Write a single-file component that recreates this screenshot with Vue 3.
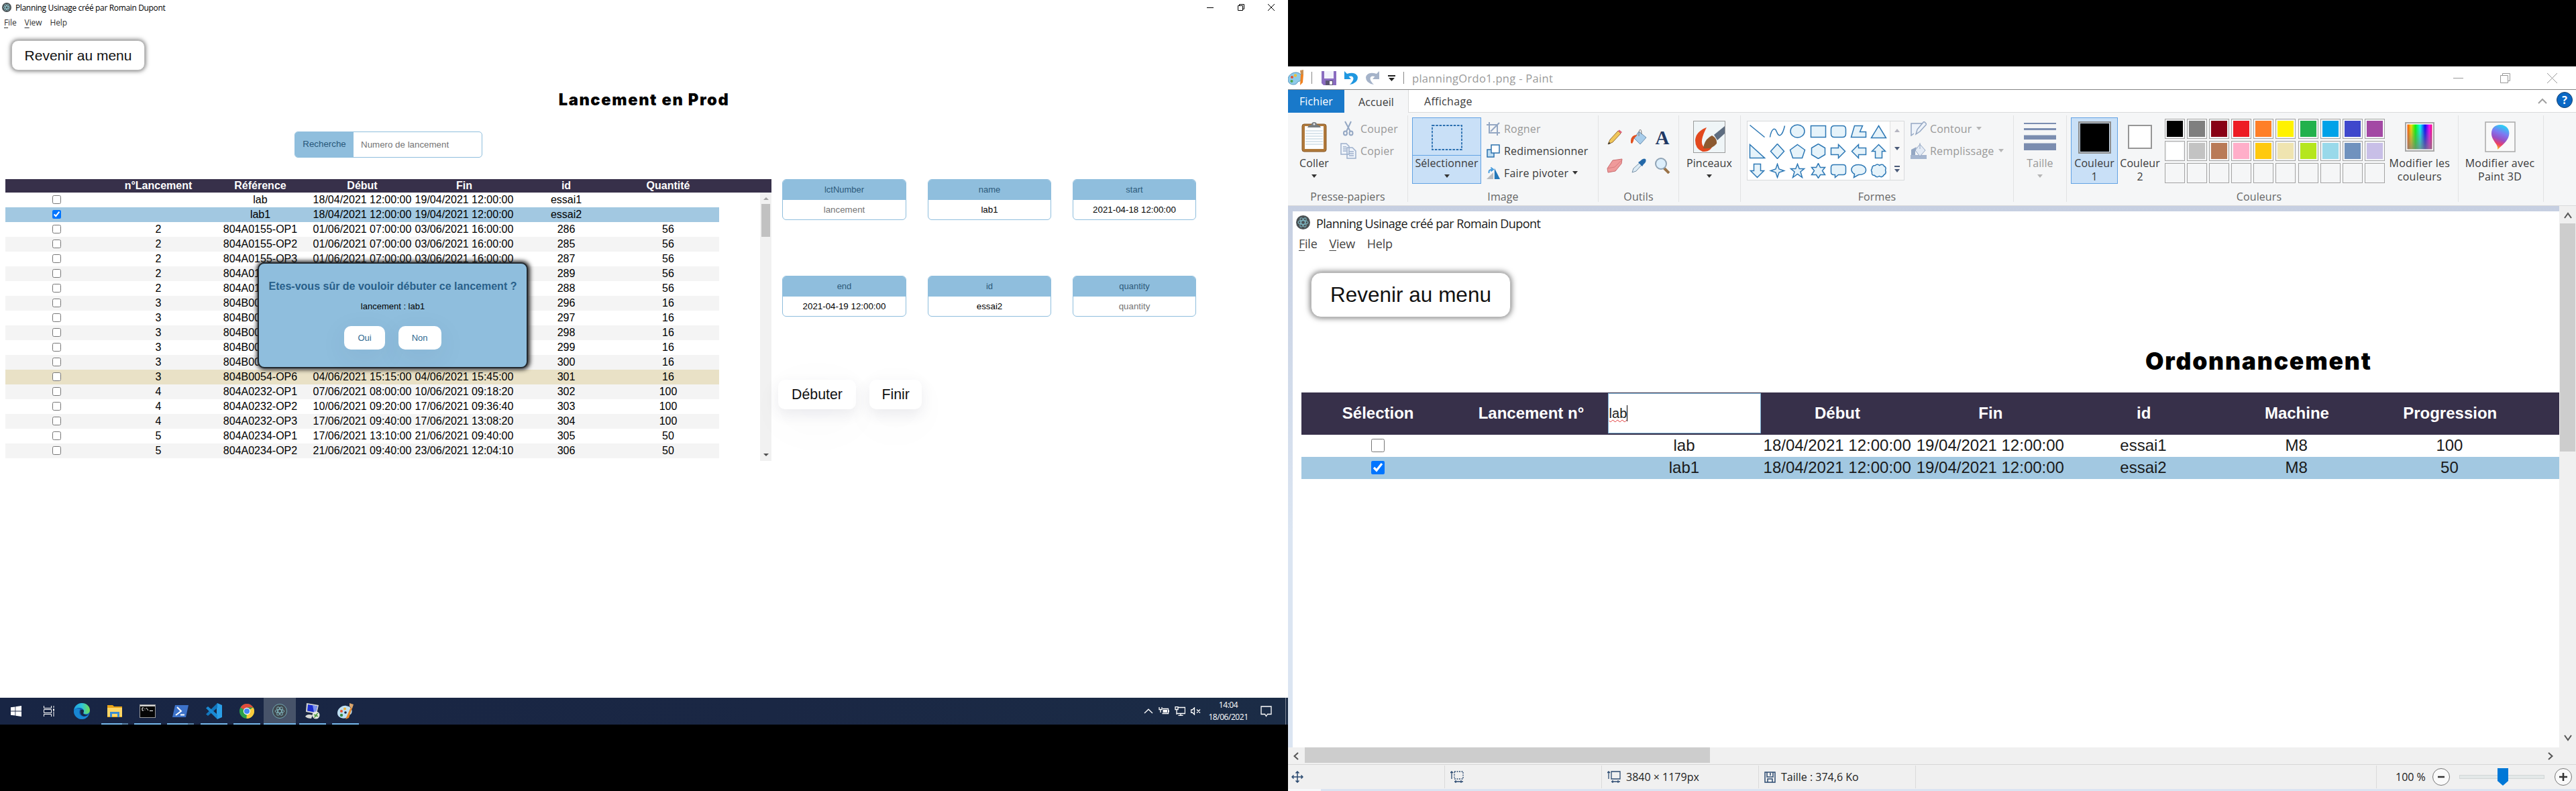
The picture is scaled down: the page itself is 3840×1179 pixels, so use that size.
<script setup>
const rows = [
  ['', 'lab', '18/04/2021 12:00:00', '19/04/2021 12:00:00', 'essai1', ''],
  ['', 'lab1', '18/04/2021 12:00:00', '19/04/2021 12:00:00', 'essai2', ''],
  ['2', '804A0155-OP1', '01/06/2021 07:00:00', '03/06/2021 16:00:00', '286', '56'],
  ['2', '804A0155-OP2', '01/06/2021 07:00:00', '03/06/2021 16:00:00', '285', '56'],
  ['2', '804A0155-OP3', '01/06/2021 07:00:00', '03/06/2021 16:00:00', '287', '56'],
  ['2', '804A0155-OP4', '', '', '289', '56'],
  ['2', '804A0155-OP5', '', '', '288', '56'],
  ['3', '804B0054-OP1', '', '', '296', '16'],
  ['3', '804B0054-OP2', '', '', '297', '16'],
  ['3', '804B0054-OP3', '', '', '298', '16'],
  ['3', '804B0054-OP4', '', '', '299', '16'],
  ['3', '804B0054-OP5', '', '', '300', '16'],
  ['3', '804B0054-OP6', '04/06/2021 15:15:00', '04/06/2021 15:45:00', '301', '16'],
  ['4', '804A0232-OP1', '07/06/2021 08:00:00', '10/06/2021 09:18:20', '302', '100'],
  ['4', '804A0232-OP2', '10/06/2021 09:20:00', '17/06/2021 09:36:40', '303', '100'],
  ['4', '804A0232-OP3', '17/06/2021 09:40:00', '17/06/2021 13:08:20', '304', '100'],
  ['5', '804A0234-OP1', '17/06/2021 13:10:00', '21/06/2021 09:40:00', '305', '50'],
  ['5', '804A0234-OP2', '21/06/2021 09:40:00', '23/06/2021 12:04:10', '306', '50'],
]
const rowClass = (i) => (i === 1 ? 'sel' : i === 12 ? 'late' : i % 2 ? 'odd' : '')

const fields = [
  { label: 'lctNumber', value: 'lancement', empty: true },
  { label: 'name', value: 'lab1' },
  { label: 'start', value: '2021-04-18 12:00:00' },
  { label: 'end', value: '2021-04-19 12:00:00' },
  { label: 'id', value: 'essai2' },
  { label: 'quantity', value: 'quantity', empty: true },
]

const ordo = [
  ['', 'lab', '18/04/2021 12:00:00', '19/04/2021 12:00:00', 'essai1', 'M8', '100'],
  ['', 'lab1', '18/04/2021 12:00:00', '19/04/2021 12:00:00', 'essai2', 'M8', '50'],
]

const palette = [
  '#000000', '#7f7f7f', '#880015', '#ed1c24', '#ff7f27', '#fff200', '#22b14c', '#00a2e8', '#3f48cc', '#a349a4',
  '#ffffff', '#c3c3c3', '#b97a57', '#ffaec9', '#ffc90e', '#efe4b0', '#b5e61d', '#99d9ea', '#7092be', '#c8bfe7',
  '', '', '', '', '', '', '', '', '', '',
]

const shapes = [
  'M1 2L23 20',
  'M1 20C3 8 8 4 11 12S19 20 23 3',
  'M12 1.500A10.500 9.500 0 1 0 12 20.500A10.500 9.500 0 1 0 12 1.500Z',
  'M1 3H23V20H1Z',
  'M6 3H18Q23 3 23 8V15Q23 20 18 20H6Q1 20 1 15V8Q1 3 6 3Z',
  'M6 3H18L14 12H23V20H1Z',
  'M12 3L23 21H1Z',
  'M1 1V21H23Z',
  'M12 0L22 11L12 22L2 11Z',
  'M12 1L23 9L19 21H5L1 9Z',
  'M12 0L22 6V16L12 22L2 16V6Z',
  'M1 6H12V1L22 11L12 21V16H1Z',
  'M23 6H12V1L2 11L12 21V16H23Z',
  'M7 21V11H2L12 1L22 11H17V21Z',
  'M7 1V11H2L12 21L22 11H17V1Z',
  'M12 1L14.500 8.500L22 11L14.500 13.500L12 21L9.500 13.500L2 11L9.500 8.500Z',
  'M12 1L14.700 8H22L16.500 12.500L19 21L12 16L5 21L7.500 12.500L2 8H9.300Z',
  'M12 0L15 6H22L18 11L22 17H15L12 22L9 17H2L6 11L2 6H9Z',
  'M5 2H19Q23 2 23 6V13Q23 17 19 17H12L7 21V17H5Q1 17 1 13V6Q1 2 5 2Z',
  'M12 2C18 2 23 5 23 10S18 17 12 17L5 21L6 16C-2 11 1 2 12 2Z',
  'M7 3Q10 0 13 3Q18 0 20 4Q24 6 22 10Q24 15 20 17Q17 22 13 19Q9 22 6 18Q1 18 2 13Q0 10 2 8Q2 3 7 3Z',
]
</script>

<template>
  <div class="desk">
    <!-- left monitor -->
    <section class="left">
      <div class="page">
        <header class="bar seg">
          <svg class="atom" viewBox="0 0 24 24"><circle cx="12" cy="12" r="12" fill="#4b5255" /><g fill="none" stroke="#8fc3cc" stroke-width="1.500"><ellipse cx="12" cy="12" rx="8.500" ry="3.300" /><ellipse cx="12" cy="12" rx="8.500" ry="3.300" transform="rotate(60 12 12)" /><ellipse cx="12" cy="12" rx="8.500" ry="3.300" transform="rotate(120 12 12)" /></g></svg>
          <span class="apptitle">Planning Usinage créé par Romain Dupont</span>
          <span class="wc"><svg viewBox="0 0 12 12"><path d="M1 6.500H11" /></svg></span>
          <span class="wc"><svg viewBox="0 0 12 12"><path d="M1.500 3.500H8.500V10.500H1.500ZM3.500 3.500V1.500H10.500V8.500H8.500" /></svg></span>
          <span class="wc"><svg viewBox="0 0 12 12"><path d="M1 1L11 11M11 1L1 11" /></svg></span>
        </header>
        <nav class="menu seg"><span><u>F</u>ile</span><span><u>V</u>iew</span><span>Help</span></nav>
        <button class="back">Revenir au menu</button>
        <h1 class="title">Lancement en Prod</h1>
        <div class="search"><label>Recherche</label><span>Numero de lancement</span></div>
        <div class="main">
          <div class="table">
            <div class="thead"><b></b><b>n°Lancement</b><b>Référence</b><b>Début</b><b>Fin</b><b>id</b><b>Quantité</b></div>
            <div class="tscroll">
              <div class="tbody">
                <div v-for="(r, i) in rows" :key="i" class="tr" :class="rowClass(i)">
                  <span><input type="checkbox" :checked="i === 1" /></span>
                  <span v-for="(c, j) in r" :key="j">{{ c }}</span>
                </div>
              </div>
              <div class="vsb"><i class="up"></i><i class="thumb"></i><i class="down"></i></div>
            </div>
          </div>
          <div class="side">
            <div class="fields">
              <div v-for="f in fields" :key="f.label" class="field">
                <label>{{ f.label }}</label><span :class="{ ph: f.empty }">{{ f.value }}</span>
              </div>
            </div>
            <div class="acts"><button>Débuter</button><button>Finir</button></div>
          </div>
        </div>
        <div class="modal">
          <h2>Etes-vous sûr de vouloir débuter ce lancement ?</h2>
          <p>lancement : lab1</p>
          <div><button>Oui</button><button>Non</button></div>
        </div>
      </div>

      <footer class="taskbar seg">
        <span class="tk"><svg width="16" height="16" viewBox="0 0 16 16" fill="#fff"><path d="M0 2.300L6.500 1.400V7.600H0ZM7.300 1.300L16 0V7.600H7.300ZM0 8.400H6.500V14.600L0 13.700ZM7.300 8.400H16V16L7.300 14.700Z" /></svg></span>
        <span class="tk"><svg width="16" height="16" viewBox="0 0 16 16" fill="none" stroke="#fff"><path d="M.500 0V3.500H11.500V0M.500 16V12.500H11.500V16M.500 5.500H11.500V10.500H.500ZM15 0V3M15 8.500V16" /><path d="M14 6H16" stroke-width="3" /></svg></span>
        <span class="tk"><svg width="24" height="24" viewBox="0 0 24 24"><defs><linearGradient id="eg" x1="0" x2="1"><stop offset="0" stop-color="#1d9fe0" /><stop offset=".5" stop-color="#2fc4d8" /><stop offset="1" stop-color="#70dd50" /></linearGradient></defs><circle cx="12" cy="12" r="12" fill="#0f5fb5" /><path d="M0 11C1 4 6 0 12 0C19 0 24 5 24 10.500C24 15 20 17 16 16C13.500 15.500 14.500 14 15 12C15 9 12 7 8.500 7C4 7 1 9 0 11Z" fill="url(#eg)" /><path d="M9 10C6 15 10 20 15 20C18 20 21 18.500 22 17.500C20 22 16 24 12 24C5 24 0 18 0 12C1 8.500 5 7 9 8.500Z" fill="#1886d2" /><path d="M10 10Q15 9 15 12C15 14 13 15 15 16.500Q18 18.300 22 17Q18 20.500 14 19.500Q8 17 10 10Z" fill="#182544" /></svg></span>
        <span class="tk run two"><svg width="22" height="20" viewBox="0 0 22 20"><path d="M0 1H8L10 3H22V19H0Z" fill="#e8a317" /><path d="M0 5H22V18H0Z" fill="#ffd766" /><path d="M4 19V11H18V19H15V14H7V19Z" fill="#3a8dd4" /></svg></span>
        <span class="tk run"><svg width="24" height="20" viewBox="0 0 24 20"><rect width="24" height="20" fill="#9b9b9b" /><rect x="1" y="3" width="22" height="16" fill="#050505" /><rect x="1" y="1" width="22" height="1.500" fill="#ddd" /><path d="M6 5H4V9H6M8 6V7M8 8.500V9M10 5L13 9M15 9.500H20" stroke="#fff" fill="none" /></svg></span>
        <span class="tk run two"><svg width="24" height="18" viewBox="0 0 24 18"><path d="M4 0H24L20 18H0Z" fill="#3d72c9" /><path d="M7 3L13 9L5 15M12 14.500H18" fill="none" stroke="#fff" stroke-width="2" /></svg></span>
        <span class="tk run"><svg width="24" height="24" viewBox="0 0 24 24"><path d="M17 0L24 3V21L17 24L16 22V2Z" fill="#2a9fe8" /><path d="M17 0V7L3 19L0 16.500Z" fill="#1277be" /><path d="M17 24V17L3 5L0 7.500Z" fill="#1a8ad4" /></svg></span>
        <span class="tk run"><svg width="22" height="22" viewBox="0 0 22 22"><circle cx="11" cy="11" r="11" fill="#2ba14b" /><path d="M11 11L1.500 5.500A11 11 0 0 1 20.500 5.500H11Z" fill="#df4a3c" /><path d="M11 11L20.500 5.500A11 11 0 0 1 10.500 22Z" fill="#fbcb3c" /><circle cx="11" cy="11" r="5.200" fill="#fff" /><circle cx="11" cy="11" r="4.100" fill="#4587f3" /></svg></span>
        <span class="tk run on"><svg width="22" height="22" viewBox="0 0 24 24"><circle cx="12" cy="12" r="11.500" fill="#40484f" stroke="#75aeb7" /><g fill="none" stroke="#82b8bf"><ellipse cx="12" cy="12" rx="7.500" ry="2.800" /><ellipse cx="12" cy="12" rx="7.500" ry="2.800" transform="rotate(60 12 12)" /><ellipse cx="12" cy="12" rx="7.500" ry="2.800" transform="rotate(120 12 12)" /></g></svg></span>
        <span class="tk run"><svg width="24" height="24" viewBox="0 0 24 24"><path d="M3 0L21 3L18 16L2 13Z" fill="#d5d8d6" /><path d="M5 2L19 4.500L16.500 14L4 11.500Z" fill="#1b2fd0" /><path d="M12 3L19 4.500L16.500 14L14 13.500Z" fill="#7d93f0" /><path d="M1 20Q4 15 12 18L10 23Q4 23 1 20Z" fill="#d9dbd8" /><circle cx="17" cy="18" r="5.500" fill="#e4e6e2" /><path d="M14 17L17 19.500L14 21.500M20 15L17 17.500L20 20" stroke="#4b9a3a" fill="none" stroke-width="1.500" /></svg></span>
        <span class="tk run"><svg width="24" height="24" viewBox="0 0 24 24"><path d="M0 15C0 8 7 3 13 4C20 5 23 10 21 15C19 19 16 16 15 20C13 25 0 23 0 15Z" fill="#bfe0f3" /><circle cx="6" cy="12" r="2" fill="#e8512c" /><circle cx="11" cy="8.500" r="2" fill="#f0b43a" /><circle cx="6" cy="18" r="2.200" fill="#3a8a47" /><circle cx="12" cy="14" r="1.800" fill="#182544" /><path d="M20 6L12 24L17 22L22 7Z" fill="#e98a2b" /><path d="M18 0L24 2L22 8L18 5Z" fill="#d8a46c" /></svg></span>
        <span class="tray">
          <svg width="14" height="8" viewBox="0 0 14 8" class="st"><path d="M1 7L7 1.200L13 7" /></svg>
          <svg width="16" height="14" viewBox="0 0 16 14" class="st"><path d="M1 1V4.500H5V1M3 5V9M6 3.500H14.500V10.500H5.500" /><path d="M6.500 5H13V9H6.500ZM15 5.500H16V8.500H15Z" fill="#fff" stroke="none" /></svg>
          <svg width="16" height="14" viewBox="0 0 16 14" class="st"><path d="M5 1.500H15.500V10.500H3M9 10.500V13M5.500 13.500H12.500M1 .500H5V4.500H1ZM3 4.500V12" /></svg>
          <svg width="15" height="12" viewBox="0 0 15 12" class="st"><path d="M.500 4H2.500L5.500 1V11L2.500 8H.500ZM9 3.500L14 8.500M14 3.500L9 8.500" /></svg>
          <span class="clock"><span>14:04</span><span>18/06/2021</span></span>
          <svg width="17" height="17" viewBox="0 0 17 17" class="st"><path d="M1 1H16V12.500H10.500L8.500 15.500L6.500 12.500H1Z" /></svg>
          <i></i>
        </span>
      </footer>
    </section>

    <!-- right monitor : Paint -->
    <section class="right">
      <header class="ptitle seg2">
        <svg width="24" height="24" viewBox="0 0 24 24"><path d="M0 15C0 8 6 4 12 4C18 4 22 9 20 14C18 19 15 16 14 19C12 24 0 23 0 15Z" fill="#8fcbe9" stroke="#5595bd" /><circle cx="6" cy="11" r="2" fill="#e84c2c" /><circle cx="11" cy="8.500" r="2.200" fill="#ebc13a" /><circle cx="5.500" cy="17" r="2" fill="#4ca64c" /><path d="M19 7L18 23L22 19L23 7Z" fill="#f0811f" /><path d="M18 1L23 0L23 7H19Z" fill="#c98f52" /></svg>
        <i class="bar1"></i>
        <svg class="save" width="22" height="21" viewBox="0 0 22 21"><path d="M0 0H22V21H3L0 18Z" fill="#8a6cc0" /><path d="M4 0H18V11H4Z" fill="#f2f2fb" /><path d="M6 14H17V21H6Z" fill="#5a5570" /><path d="M12 15H16V20H12Z" fill="#fff" /></svg>
        <svg class="undo" width="20" height="20" viewBox="0 0 20 20"><path d="M0 0V12H10L6.500 8Q13 6 13.500 11Q13.500 15 8 20Q20 18 20 9.500Q18 0 4 4Z" fill="#1f97e0" /></svg>
        <svg class="redo" width="20" height="20" viewBox="0 0 20 20"><path d="M20 0V12H10L13.500 8Q7 6 6.500 11Q6.500 15 12 20Q0 18 0 9.500Q2 0 16 4Z" fill="#a5b3c9" /></svg>
        <svg class="cust" width="11" height="9" viewBox="0 0 11 9"><path d="M0 0H11V2H0ZM1 4H10L5.500 9Z" fill="#222" /></svg>
        <i class="bar2"></i>
        <span class="ptxt">planningOrdo1.png - Paint</span>
        <span class="pwc"><svg viewBox="0 0 17 17"><path d="M1 8.500H16" /></svg></span>
        <span class="pwc"><svg viewBox="0 0 17 17"><path d="M1.500 4.500H12.500V15.500H1.500ZM4.500 4.500V1.500H15.500V12.500H12.500" /></svg></span>
        <span class="pwc"><svg viewBox="0 0 17 17"><path d="M1 1L16 16M16 1L1 16" /></svg></span>
      </header>
      <nav class="tabs seg2">
        <span class="file">Fichier</span><span class="acc">Accueil</span><span class="aff">Affichage</span>
        <svg width="14" height="9" viewBox="0 0 14 9"><path d="M1 8L7 2L13 8" fill="none" stroke="#a0a0a0" stroke-width="2" /></svg>
        <span class="help">?</span>
      </nav>

      <div class="ribbon seg2">
        <div class="grp g1">
          <div class="body">
            <div class="big w78"><div class="ic"><svg width="38" height="46" viewBox="0 0 38 46"><rect x="1" y="4" width="36" height="41" rx="3" fill="#b0793a" stroke="#8a5a26" /><rect x="5" y="7" width="28" height="34" fill="#fdfeff" /><path d="M6 14H32M6 18H32M6 22H32M6 26H32M6 30H32M6 34H32" stroke="#b9cdd9" /><path d="M9 9Q11 5 15 5Q15 1 19 1Q23 1 23 5Q27 5 29 9Z" fill="#777c80" /><circle cx="19" cy="4" r="1.500" fill="#eee" /></svg></div><span>Coller</span><i class="arr"></i></div>
            <div class="list dis">
              <div><svg width="24" height="24" viewBox="0 0 24 24" fill="none" stroke="#94a7c3" stroke-width="2"><path d="M7 1L15 16M16 1L9 16" /><ellipse cx="7.500" cy="18.500" rx="2.500" ry="3" /><ellipse cx="16" cy="18.500" rx="2.500" ry="3" /></svg><span>Couper</span></div>
              <div><svg width="24" height="24" viewBox="0 0 24 24" fill="#eef3fa" stroke="#9db0cc" stroke-width="1.500"><path d="M1 1H9L13 5V17H1ZM10 7H18L23 12V23H10Z" /><path d="M4 6H9M4 9H9M4 12H9M13 13H20M13 16H20M13 19H20" /></svg><span>Copier</span></div>
            </div>
          </div>
          <p>Presse-papiers</p>
        </div>
        <div class="grp g2">
          <div class="body">
            <div class="big selbtn"><div class="ic"><svg width="46" height="38" viewBox="0 0 46 38"><rect x="1" y="1" width="44" height="36" fill="none" stroke="#2a6fb0" stroke-width="1.800" stroke-dasharray="3.500 1.800" /></svg></div><span>Sélectionner</span><i class="arr"></i></div>
            <div class="list l2">
              <div class="dis"><svg width="20" height="20" viewBox="0 0 20 20" fill="none" stroke="#94a7c3" stroke-width="2"><path d="M0 4H16V20M4 0V16H20M6 14L19 1" /></svg><span>Rogner</span></div>
              <div><svg width="20" height="20" viewBox="0 0 20 20" fill="#fff" stroke="#2d72ad" stroke-width="1.500"><path d="M1 8H11V19H1Z" fill="#bcdcf2" /><path d="M7 1H19V13H7Z" /></svg><span>Redimensionner</span></div>
              <div><svg width="22" height="20" viewBox="0 0 22 20"><path d="M0 20H11V9Z" fill="#b8bcc0" /><path d="M13 2V20H22Z" fill="#2377b8" /><path d="M4 10Q3 4 9 4M7 1L11 4L7 7" fill="none" stroke="#3d97dd" stroke-width="2" /></svg><span>Faire pivoter</span><i class="arr"></i></div>
            </div>
          </div>
          <p>Image</p>
        </div>
        <div class="grp g3">
          <div class="body tools">
            <svg viewBox="0 0 24 24"><path d="M2 22L5 15L17 2L21 6L9 19Z" fill="#f0c65a" stroke="#97703a" /><path d="M17 2L19 0.500L23 4L21 6Z" fill="#e0637a" /><path d="M2 22L3.500 18.500L6 21Z" fill="#333" /></svg>
            <svg viewBox="0 0 24 24"><path d="M12 3L23 12L14 22L5 13Z" fill="#a8cdeb" stroke="#6b8fb0" /><path d="M0 20Q-1 8 10 8L5 13Q4 18 2 21Z" fill="#e2501f" /><path d="M12 10Q12 0 14 0Q16 0 16 7" fill="none" stroke="#777" /></svg>
            <span class="ta">A</span>
            <svg viewBox="0 0 24 24"><path d="M1 16L9 4L23 2L22 9L13 20L2 22Z" fill="#ef9a9a" stroke="#c96d70" /><path d="M1 16L12 14L23 3" fill="none" stroke="#d87d80" /></svg>
            <svg viewBox="0 0 24 24"><path d="M2 22L4 16L13 8L16 11L8 20Z" fill="#dcebf5" stroke="#7a93a8" /><path d="M11 7L14 5Q18 0 22 2Q24 6 19 10L17 13Z" fill="#2468a8" /></svg>
            <svg viewBox="0 0 24 24"><path d="M14 15L22 23" stroke="#9a7348" stroke-width="4" /><circle cx="10" cy="9" r="8" fill="#dceefb" stroke="#8fa3b5" stroke-width="2" /></svg>
          </div>
          <p>Outils</p>
        </div>
        <div class="grp g4">
          <div class="body"><div class="big w90"><div class="ic"><svg width="48" height="48" viewBox="0 0 48 48"><rect x=".5" y=".5" width="47" height="47" fill="#eff5f7" stroke="#9b9b9b" /><path d="M20 10Q4 16 3 29Q3 42 14 46Q27 47 30 34Q22 42 15 38Q9 31 20 10Z" fill="#e2481e" /><path d="M47 8L31 21L36 29L47 19Z" fill="#5e6d80" /><path d="M15 41Q17 27 28 22Q36 26 35 34Q28 43 15 41Z" fill="#8c5a30" /></svg></div><span>Pinceaux</span><i class="arr"></i></div></div>
          <p></p>
        </div>
        <div class="grp g5">
          <div class="body">
            <div class="shapes">
              <div class="sg"><svg v-for="(d, i) in shapes" :key="i" viewBox="-.5 -.5 25 23"><path :d="d" :fill="i < 2 ? 'none' : '#e6f3fa'" stroke="#2d78b5" stroke-width="1.500" /></svg></div>
              <div class="sa"><i class="arr upx"></i><i class="arr"></i><span><i class="arr"></i></span></div>
            </div>
            <div class="list dis l5">
              <div><svg width="24" height="22" viewBox="0 0 24 22" fill="#eef3fa" stroke="#94a7c3" stroke-width="1.500"><path d="M17 3H1V21L5 18" /><path d="M8 19L10 12L20 0L24 4L14 15Z" /></svg><span>Contour</span><i class="arr"></i></div>
              <div><svg width="24" height="24" viewBox="0 0 24 24"><path d="M0 18H24V24H0Z" fill="#a5b5cf" /><path d="M14 2L22 11L14 20L7 11Z" fill="#e4ebf5" stroke="#94a7c3" /><path d="M1 18V10L9 6L7 13V18Z" fill="#94a7c3" /><path d="M14 0V9" stroke="#94a7c3" /></svg><span>Remplissage</span><i class="arr"></i></div>
            </div>
          </div>
          <p>Formes</p>
        </div>
        <div class="grp g6">
          <div class="body"><div class="big dis w78"><div class="ic"><svg width="48" height="42" viewBox="0 0 48 42" fill="#7b8db0"><path d="M0 0H48V2H0ZM0 8H48V11H0ZM0 18.500H48V25H0ZM0 30.500H48V41H0Z" /></svg></div><span>Taille</span><i class="arr"></i></div></div>
          <p></p>
        </div>
        <div class="grp g7">
          <div class="body">
            <div class="big c1"><div class="ic"><b class="sw1"></b></div><span>Couleur</span><span>1</span></div>
            <div class="big c2"><div class="ic"><b class="sw2"></b></div><span>Couleur</span><span>2</span></div>
            <div class="pal"><b v-for="(c, i) in palette" :key="i" :class="{ none: !c }" :style="{ backgroundColor: c || 'transparent' }"></b></div>
            <div class="big w100"><div class="ic"><b class="rainbow"></b></div><span>Modifier les</span><span>couleurs</span></div>
          </div>
          <p>Couleurs</p>
        </div>
        <div class="grp g8">
          <div class="body"><div class="big w123"><div class="ic"><svg width="46" height="46" viewBox="0 0 46 46"><defs><linearGradient id="p3" x1=".7" y1="0" x2=".4" y2="1"><stop offset="0" stop-color="#1edcf5" /><stop offset=".35" stop-color="#7d79f2" /><stop offset=".6" stop-color="#9a4fc4" /><stop offset=".8" stop-color="#ee3f66" /><stop offset="1" stop-color="#f8c51c" /></linearGradient></defs><rect x="1" y="1" width="44" height="44" fill="#f9f9f9" stroke="#a9a9a9" stroke-width="1.500" /><path d="M23 5C33 5 38 13 36 21C34 30 26 35 19 42C21 34 10 29 10 18C10 10 15 5 23 5Z" fill="url(#p3)" /></svg></div><span>Modifier avec</span><span>Paint 3D</span></div></div>
          <p></p>
        </div>
      </div>

      <div class="work">
        <div class="canvas">
          <header class="cbar seg">
            <svg class="atom" viewBox="0 0 24 24"><circle cx="12" cy="12" r="12" fill="#4b5255" /><g fill="none" stroke="#7fb8c4" stroke-width="1.300"><ellipse cx="12" cy="12" rx="8.500" ry="3.300" /><ellipse cx="12" cy="12" rx="8.500" ry="3.300" transform="rotate(60 12 12)" /><ellipse cx="12" cy="12" rx="8.500" ry="3.300" transform="rotate(120 12 12)" /></g></svg>
            <span>Planning Usinage créé par Romain Dupont</span>
          </header>
          <nav class="cmenu seg"><span><u>F</u>ile</span><span><u>V</u>iew</span><span>Help</span></nav>
          <button class="cback">Revenir au menu</button>
          <h1 class="ctitle">Ordonnancement</h1>
          <div class="chead"><b>Sélection</b><b>Lancement n°</b><b class="inp"><span>lab</span><i></i></b><b>Début</b><b>Fin</b><b>id</b><b>Machine</b><b>Progression</b></div>
          <div v-for="(r, i) in ordo" :key="i" class="crow" :class="{ sel: i === 1 }">
            <span><input type="checkbox" :checked="i === 1" /></span>
            <span v-for="(c, j) in r" :key="j">{{ c }}</span>
          </div>
        </div>
        <div class="pvs">
          <svg width="12" height="10" viewBox="0 0 12 10"><path d="M1 9L6 2L11 9" /></svg>
          <i></i>
          <svg width="12" height="10" viewBox="0 0 12 10"><path d="M1 1L6 8L11 1" /></svg>
        </div>
      </div>
      <div class="phs">
        <svg width="8" height="12" viewBox="0 0 8 12"><path d="M7 1L1.500 6L7 11" /></svg>
        <i></i>
        <svg width="8" height="12" viewBox="0 0 8 12"><path d="M1 1L6.500 6L1 11" /></svg>
      </div>
      <footer class="status seg2">
        <div class="s1"><svg width="18" height="18" viewBox="0 0 18 18" fill="none" stroke="#2b4a70" stroke-width="1.500"><path d="M9 1V17M1 9H17M6.500 3.500L9 1L11.500 3.500M6.500 14.500L9 17L11.500 14.500M3.500 6.500L1 9L3.500 11.500M14.500 6.500L17 9L14.500 11.500" /></svg></div>
        <div class="s2"><svg width="20" height="18" viewBox="0 0 20 18" fill="none" stroke="#2b4a70" stroke-width="1.300"><path d="M6 1H19V12H6Z" stroke-dasharray="2 1.500" /><path d="M2 1V12M0 3L2 1L4 3M6 16H19M16 14V18M8 14V18" /></svg></div>
        <div class="s2"><svg width="20" height="18" viewBox="0 0 20 18" fill="none" stroke="#2b4a70" stroke-width="1.300"><path d="M6 1H19V12H6Z" /><path d="M2 1V12M0 3L2 1L4 3M6 16H19M16 14V18M8 14V18" /></svg><span>3840 × 1179px</span></div>
        <div class="s2"><svg width="17" height="17" viewBox="0 0 17 17" fill="none" stroke="#2b4a70" stroke-width="1.500"><path d="M1 1H16V16H1ZM4 1V8H13V1M5 16V11H12V16M9 2V6" /></svg><span>Taille : 374,6 Ko</span></div>
        <div class="s5"></div>
        <span class="pct">100 %</span>
        <span class="rnd"><svg width="14" height="14" viewBox="0 0 14 14"><path d="M2 7H12" /></svg></span>
        <span class="slider"><svg width="16" height="26" viewBox="0 0 16 26"><path d="M0 0H16V19L8 26L0 19Z" fill="#0078d7" /></svg></span>
        <span class="rnd"><svg width="14" height="14" viewBox="0 0 14 14"><path d="M1 7H13M7 1V13" /></svg></span>
      </footer>
      <div class="edge"></div>
    </section>
  </div>
</template>

<style>
body { margin: 0; background: #000; overflow: hidden; }
</style>

<style scoped>
* { box-sizing: border-box; }
.desk { display: flex; width: 3840px; height: 1179px; background: #000; font-family: 'Liberation Sans', Arial, sans-serif; color: #000; overflow: hidden; }
.seg { font-family: 'Open Sans', 'Noto Sans', sans-serif; }
.seg2 { font-family: 'Open Sans', 'Noto Sans', sans-serif; font-size: 16px; letter-spacing: 0.1px; color: #3b3b3b; }
button { font-family: inherit; border: 0; background: #fff; padding: 0; color: #111; white-space: nowrap; }
h1, h2, p { margin: 0; }
u { text-underline-offset: 3px; }
input[type='checkbox'] { margin: 0; width: 13px; height: 13px; display: block; }
span { white-space: nowrap; }

.left { width: 1920px; display: flex; flex-direction: column; }
.page { position: relative; height: 1040px; background: #fff; display: flex; flex-direction: column; align-items: flex-start; overflow: hidden; }
.bar { display: flex; width: 100%; height: 24px; align-items: center; font-size: 12px; letter-spacing: -0.350px; padding: 0 2px 2px 3px; }
.bar .atom { width: 14px; height: 14px; margin-right: 6px; }
.apptitle { flex: 1; }
.wc { width: 45.500px; height: 20px; display: flex; align-items: center; justify-content: center; }
.wc svg { width: 12px; height: 12px; fill: none; stroke: #000; stroke-width: 1; }
.menu { display: flex; height: 18px; align-items: center; gap: 12px; padding-left: 6px; font-size: 12px; letter-spacing: -0.1px; color: #333; }
.back { margin: 18px 0 0 17px; width: 199px; height: 45px; border-radius: 10px; font-size: 21px; box-shadow: 0 0 6px 1px #777; border: 1px solid #bbb; }
.title { margin-top: 24px; margin-bottom: -1px; width: 1920px; height: 40px; text-align: center; font: 900 23.700px/40px Inter, sans-serif; letter-spacing: 1.600px; }
.search { margin: 28px 0 0 439px; width: 280px; height: 39px; border: 1px solid #8fbedd; border-radius: 5px; display: flex; align-items: center; font-size: 13.330px; color: #757575; overflow: hidden; }
.search label { width: 87px; height: 39px; line-height: 38px; text-align: center; background: #8fbedd; color: #29587a; font-size: 13.330px; margin-right: 11px; }
.main { display: flex; margin: 32px 0 0 8px; }
.table { width: 1142px; }
.thead { display: flex; height: 20px; background: #37304a; color: #fff; font-size: 16px; }
.thead b { width: 152px; text-align: center; line-height: 19px; }
.tscroll { display: flex; justify-content: space-between; height: 400px; }
.tr { display: flex; width: 1064px; height: 22px; line-height: 20px; font-size: 16px; }
.tr span { width: 152px; height: 21px; display: flex; justify-content: center; align-items: center; }
.tr.odd { background: #f4f4f4; }
.tr.sel, .crow.sel { background: #a2c8e1; }
.tr.late { background: #e9e1c6; }
.vsb { width: 17px; background: #f1f1f1; display: flex; flex-direction: column; align-items: center; }
.up { border: 4px solid transparent; border-bottom-color: #a3a3a3; border-top: 0; margin-top: 7px; }
.thumb { width: 13px; height: 49px; background: #c1c1c1; margin-top: 6px; }
.down { border: 4px solid transparent; border-top-color: #505050; border-bottom: 0; margin: auto 0 7px; }
.side { padding-left: 10px; }
.fields { display: grid; grid-template-columns: 185px 184px 184px; gap: 83px 32px; padding-left: 6px; }
.field { height: 61px; border: 1px solid #8fbedd; border-radius: 6px; overflow: hidden; text-align: center; font-size: 13.330px; display: flex; flex-direction: column; }
.field label { height: 30px; line-height: 30px; background: #8fbedd; color: #2d5a7a; font-size: 13px; }
.field span { line-height: 29px; }
.field .ph { color: #757575; }
.acts { display: flex; gap: 20px; margin-top: 94px; }
.acts button { height: 44px; padding: 0 20px; font-size: 21.330px; border-radius: 10px; box-shadow: 0 8px 20px rgba(50, 50, 93, 0.09), 0 18px 80px rgba(50, 50, 93, 0.035); }
.acts button:last-child { padding: 0 18.500px; }
.modal { position: absolute; left: 384px; top: 391px; width: 403px; height: 158px; background: #8fbedd; border: 2px solid #232a30; border-radius: 10px; box-shadow: 1px 0 6px 2px #222; display: flex; flex-direction: column; align-items: center; }
.modal h2 { font-size: 16px; line-height: 20px; margin-top: 24px; color: #29608a; white-space: nowrap; }
.modal p { font-size: 13px; line-height: 16px; margin-top: 12px; }
.modal div { display: flex; gap: 20px; margin-top: 21px; }
.modal button { height: 35px; padding: 0 20px; font-size: 13px; border-radius: 10px; color: #2f6a90; box-shadow: 0 10px 40px rgba(50, 50, 93, 0.08); }

.taskbar { height: 40px; display: flex; background: linear-gradient(90deg, #182544, #1a2744 60%, #1b2c46); color: #fff; padding-right: 3px; }
.tk { width: 48px; height: 40px; display: flex; align-items: center; justify-content: center; margin-right: 1.100px; }
.run { background: linear-gradient(#76b9ed, #76b9ed) 4px 38px / 40px 2px no-repeat; }
.two { background: linear-gradient(90deg, #76b9ed 31px, #5782a8 31px) 4px 38px / 40px 2px no-repeat; }
.on { background: linear-gradient(#76b9ed, #76b9ed) 0 38px / 48px 2px no-repeat #475369; }
.tray { margin-left: auto; display: flex; align-items: center; }
.tray svg { margin-right: 8px; }
.st { fill: none; stroke: #fff; stroke-width: 1.300; }
.clock { display: flex; flex-direction: column; align-items: center; width: 74px; margin-right: 11px; font-size: 12px; line-height: 18px; letter-spacing: -0.450px; }
.tray svg:nth-of-type(4) { margin-right: 4px; }
.tray svg:nth-of-type(5) { margin-right: 20px; }
.tray i { width: 1px; height: 40px; background: #7b8494; }

.right { width: 1920px; margin-top: 99px; background: #fff; display: flex; flex-direction: column; height: 1080px; }
.ptitle { height: 35px; display: flex; align-items: center; border-bottom: 1px solid #848484; font-size: 16.500px; letter-spacing: 0.3px; }
.bar1, .bar2 { width: 1px; height: 18px; background: #888; }
.bar1 { margin: 0 14px 0 11px; }
.save { margin-right: 12px; }
.undo { margin-right: 12px; }
.redo { margin-right: 13px; }
.bar2 { margin: 0 12px; }
.ptxt { color: #9a9a9a; flex: 1; }
.pwc { width: 69.500px; display: flex; justify-content: center; }
.pwc svg { width: 17px; height: 17px; fill: none; stroke: #999; }
.pwc:last-child { width: 71px; }
.tabs { height: 34px; display: flex; align-items: center; border-bottom: 1px solid #dadbdc; }
.tabs .file { width: 84px; height: 34px; line-height: 35px; text-align: center; background: #1979ca; color: #fff; }
.tabs .acc { width: 96px; height: 35px; line-height: 36px; text-align: center; background: #f5f6f7; border-right: 1px solid #dadbdc; margin-bottom: -1px; }
.tabs .aff { margin-left: 23px; flex: 1; letter-spacing: 0.3px; }
.help { width: 24px; height: 24px; border-radius: 50%; background: #0a68c5; border: 1px solid #17416e; color: #fff; font-weight: 700; text-align: center; line-height: 22px; margin: -4px 5px 0 14px; }
.ribbon { display: flex; height: 139px; background: #f5f6f7; padding-top: 4px; border-bottom: 1px solid #dadbdc; }
.grp { height: 129px; border-right: 1px solid #e2e3e4; display: flex; flex-direction: column; }
.grp p { height: 16px; line-height: 16px; text-align: center; color: #666; }
.body { height: 113px; display: flex; }
.g1 { width: 179px; } .g2 { width: 284px; } .g3 { width: 120px; } .g4 { width: 92px; } .g5 { width: 407px; } .g6 { width: 79px; } .g7 { width: 584px; } .g8 { width: 127px; }
.big { display: flex; flex-direction: column; align-items: center; line-height: 20px; }
.ic { height: 61px; padding-top: 2px; display: flex; align-items: center; justify-content: center; }
.arr { border: 4px solid transparent; border-top: 5px solid #333; border-bottom: 0; }
.big > .arr { margin-top: 7px; }
.dis { color: #999; }
.dis .arr { border-top-color: #b5b5b5; }
.w78 { width: 78px; } .w90 { width: 90px; } .w100 { width: 104px; } .w123 { width: 123px; }
.list { padding-top: 3px; letter-spacing: 0.2px; }
.list > div { height: 33px; display: flex; align-items: center; }
.list svg { margin-right: 6px; }
.list .arr { margin-left: 6px; }
.selbtn { margin: 3px 0 0 6px; width: 103px; height: 99px; background: #c9e0f7; border: 1px solid #62a2e4; }
.selbtn .ic { width: 100%; height: 56px; border-bottom: 1px solid #62a2e4; margin-bottom: 1px; }
.l2 { padding-left: 8px; }
.l2 svg { width: 20px; }
.tools { display: grid; grid-template-columns: 24px 24px 24px; grid-auto-rows: 24px; gap: 18px 11.500px; padding: 21px 0 0 12px; }
.ta { font: 700 29px/24px 'Liberation Serif', serif; color: #1f3864; text-align: center; }
.shapes { margin: 8px 0 0 9px; width: 235px; height: 89px; background: #fff; border: 1px solid #d8dadc; display: flex; }
.sg { width: 213px; display: grid; grid-template-columns: repeat(7, 30.200px); grid-auto-rows: 29.500px; border-right: 1px solid #e0e0e0; }
.sg svg { width: 25px; height: 23px; margin: 3px 0 0 2px; }
.sa { flex: 1; background: #f8f8f8; display: flex; flex-direction: column; align-items: center; justify-content: space-around; }
.sa .arr { border-top-color: #4a5a78; display: block; margin-left: 0; }
.sa .upx { border-top: 0; border-bottom: 5px solid #b5b5c0; }
.sa span { border-top: 2px solid #4a5a78; padding-top: 3px; }
.l5 { padding-left: 9px; }
.l5 svg { margin-right: 5px; }
.c1 { margin: 3px 0 0 6px; width: 70px; height: 99px; background: #c9e0f7; border: 1px solid #62a2e4; }
.c1 .ic { height: 57px; padding-top: 0; }
.sw1 { width: 49px; height: 48px; background: #000; border: 2px solid #8d8d8d; box-shadow: inset 0 0 0 1px #cde; }
.sw2 { width: 36px; height: 36px; background: #fff; border: 2px solid #969696; }
.c2 { width: 66px; }
.pal { display: grid; grid-template-columns: repeat(10, 30px); grid-auto-rows: 30px; gap: 3px 3.100px; margin: 5px 0 0 4px; }
.pal b { border: 1.500px solid #a3a3a3; box-shadow: inset 0 0 0 2px #f5f6f7; }
.pal .none { box-shadow: none; }
.rainbow { width: 44px; height: 44px; border: 2px solid #a7a7a7; box-shadow: inset 0 0 0 1.500px #fff; background: linear-gradient(transparent, rgba(128, 128, 128, 0.8)), linear-gradient(90deg, #f20, #fd0 18%, #0f0 34%, #0ff 52%, #00f 70%, #f0f 86%, #f04); }
.g7 p { padding-right: 10px; }
.g7 .w100, .g8 .w123 { letter-spacing: 0.250px; }

.work { height: 807px; display: flex; background: linear-gradient(#c6cfe1, #dbe5f2 60%); }
.canvas { width: 1888px; height: 799px; margin: 8px 0 0 7px; background: #fff; display: flex; flex-direction: column; align-items: flex-start; }
.cbar { display: flex; align-items: center; height: 33px; padding: 2px 0 0 5px; font-size: 18px; letter-spacing: -0.540px; color: #1a1a1a; }
.cbar .atom { width: 21px; height: 21px; margin-right: 9px; margin-top: -3px; }
.cmenu { display: flex; align-items: center; height: 30px; padding-left: 9px; gap: 18px; font-size: 18px; letter-spacing: -0.250px; color: #444; }
.cback { margin: 28px 0 0 27px; width: 298px; height: 67px; border-radius: 15px; font-size: 31.500px; border: 1px solid #bbb; box-shadow: 0 0 9px 1px #777; }
.ctitle { font: 900 35.500px/60px Inter, sans-serif; letter-spacing: 1.800px; margin: 36px 0 0 1271px; height: 60px; }
.chead { display: flex; height: 63px; width: 1875px; margin: 16px 0 0 13px; padding-bottom: 1px; background: #37304a; color: #fff; font-size: 24px; align-items: center; overflow: hidden; }
.chead b { width: 228.300px; flex: none; text-align: center; }
.chead .inp { height: 60px; background: #fff; border: 1px solid #7db1d4; color: #222; font-weight: 400; font-size: 20px; display: flex; align-items: center; padding-left: 1px; }
.inp span { text-decoration: underline wavy #e03030 1px; text-underline-offset: 2px; }
.inp i { width: 1px; height: 24px; background: #000; }
.crow { display: flex; width: 1875px; height: 33px; margin-left: 13px; padding-bottom: 2px; font-size: 24px; color: #1a1a1a; overflow: hidden; }
.crow span { width: 228.200px; flex: none; display: flex; align-items: center; justify-content: center; }
.crow input { width: 20px; height: 20px; }
.pvs { width: 25px; background: #f0f0f0; display: flex; flex-direction: column; align-items: center; padding: 9px 0; }
.pvs i { width: 23px; height: 340px; background: #cdcdcd; margin: 7px 0 auto; }
.pvs svg, .phs svg { fill: none; stroke: #555; stroke-width: 2; flex: none; }
.phs { height: 25px; background: #f0f0f0; display: flex; align-items: center; padding: 0 34px 0 8px; }
.phs i { width: 604px; height: 23px; background: #cdcdcd; margin: 0 auto 2px 9px; }
.status { height: 37px; background: #f0f0f0; border-top: 1px solid #d7d7d7; display: flex; align-items: center; color: #222; letter-spacing: 0; }
.status div { height: 34px; width: 234px; border-right: 1px solid #dadada; display: flex; align-items: center; padding-left: 8px; }
.status .s1 { padding-left: 5px; }
.status .s5 { width: 687px; }
.status .s2 svg { margin-right: 8px; }
.pct { width: 55px; margin-left: 28px; }
.rnd { width: 26px; height: 26px; border-radius: 50%; border: 1.500px solid #777; background: #fafafa; display: flex; align-items: center; justify-content: center; flex: none; }
.rnd svg { fill: none; stroke: #333; stroke-width: 2.500; }
.slider { width: 127px; height: 6px; margin: 0 15px 0 14px; background: #e3e8e8; border: 1px solid #d2d6d6; display: flex; align-items: center; flex: none; }
.slider svg { margin-left: 56px; flex: none; }
.edge { height: 3px; background: linear-gradient(90deg, #f6f8fa 49px, #dae4f2 49px); }
</style>
